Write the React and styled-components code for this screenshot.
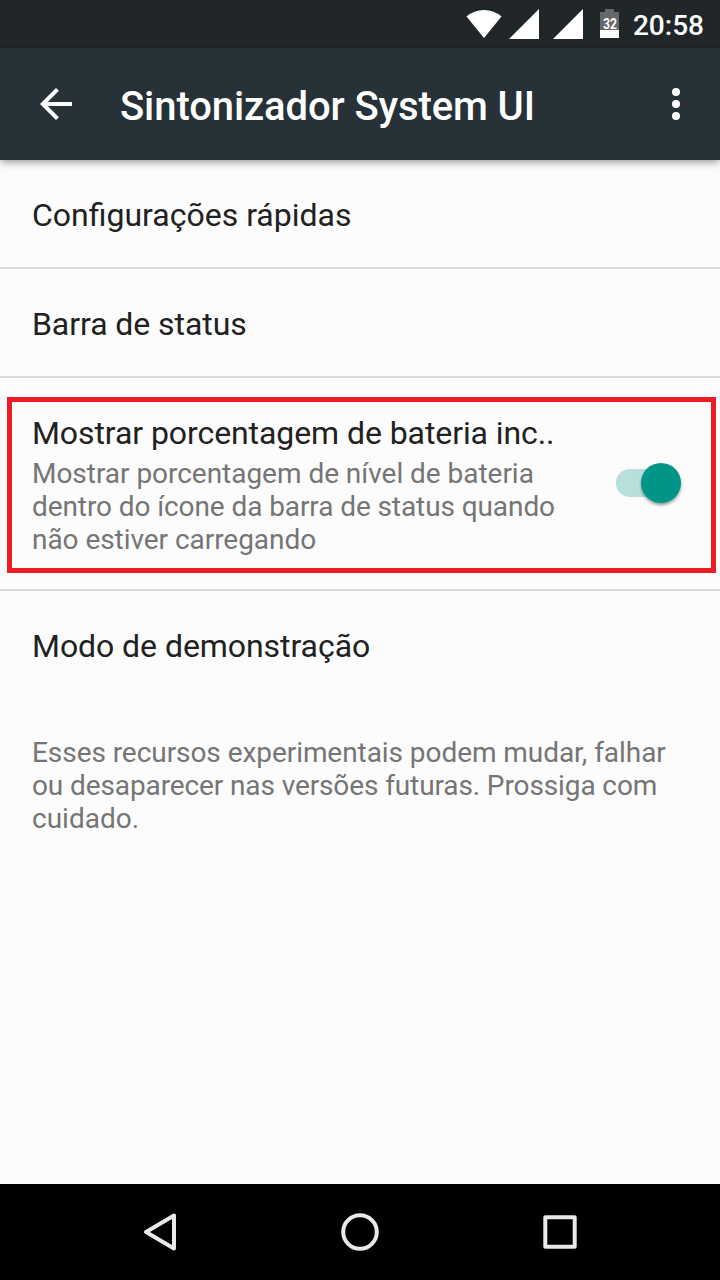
import React from "react";
import styled, { createGlobalStyle } from "styled-components";

const GlobalStyle = createGlobalStyle`
  * { box-sizing: border-box; }
  body { margin: 0; font-family: Roboto, "Noto Sans", sans-serif; background: #fcfcfc; }
`;

const Screen = styled.div`
  width: 720px;
  height: 1280px;
  display: flex;
  flex-direction: column;
  background: #fcfcfc;
  overflow: hidden;
`;

const StatusBar = styled.header`
  height: 48px;
  flex: none;
  display: flex;
  align-items: center;
  justify-content: space-between;
  padding: 0 16px 0 464px;
  background: #212729;
  color: #fff;
`;

const StatusIcons = styled.svg`
  display: block;
  flex: none;
  width: 160px;
  height: 48px;
`;

const Clock = styled.time`
  font-size: 28px;
  font-weight: 500;
  line-height: 48px;
  padding-top: 3px;
`;

const AppBar = styled.div`
  height: 112px;
  flex: none;
  display: flex;
  align-items: center;
  padding: 0 32px 0 36px;
  background: #263238;
  box-shadow: 0 2px 8px rgba(0, 0, 0, 0.42);
  z-index: 1;
`;

const BarIcon = styled.svg`
  display: block;
  flex: none;
  fill: #fff;
`;

const Title = styled.h1`
  flex: 1;
  margin: 0;
  padding: 6px 0 0 44px;
  color: #fff;
  font-size: 40px;
  font-weight: 500;
  line-height: 48px;
  letter-spacing: -0.1px;
  white-space: nowrap;
`;

const List = styled.main`
  flex: 1;
`;

const Row = styled.section`
  height: 109px;
  display: flex;
  align-items: center;
  padding: ${(p) => (p.$last ? 1 : 3)}px 32px 0;
  border-bottom: ${(p) => (p.$last ? "none" : "2px solid #dadada")};
`;

const RowTitle = styled.div`
  font-size: 32px;
  line-height: 38px;
  letter-spacing: ${(p) => p.$tracking || 0}px;
  color: #212121;
  white-space: nowrap;
`;

const HighlightRow = styled.section`
  height: 213px;
  padding: 19px 4px 0 7px;
  border-bottom: 2px solid #dadada;
`;

const Highlight = styled.div`
  height: 176px;
  display: flex;
  justify-content: space-between;
  border: 5px solid #ed1c24;
  padding: 12px 24px 0 20px;
`;

const Summary = styled.p`
  margin: ${(p) => p.$margin || "0"};
  font-size: 28px;
  line-height: 33px;
  color: #757575;
`;

const Line = styled.span`
  display: block;
  white-space: nowrap;
  letter-spacing: ${(p) => p.$tracking || 0}px;
`;

const Switch = styled.svg`
  flex: none;
  width: 80px;
  height: 60px;
  margin-top: 40px;
`;

const NavBar = styled.nav`
  height: 96px;
  flex: none;
  display: flex;
  justify-content: center;
  align-items: center;
  gap: 140px;
  background: #000;
`;

const NavIcon = styled.svg`
  width: 60px;
  height: 60px;
  fill: none;
  stroke: #e9e9e9;
  stroke-width: 4;
  stroke-linejoin: round;
`;

export default function App() {
  return (
    <Screen>
      <GlobalStyle />
      <StatusBar>
        <StatusIcons viewBox="464 0 160 48" fill="#fff">
          <path d="M466.500 16.500Q474 10 484 10T501.500 16.500L484 38Z" />
          <path d="M509 39H539V9Z" />
          <path d="M553 39H583V9Z" />
          <path d="M605 9h9v3h5v18h-19V12h5Z" fill="#64686a" />
          <path d="M600 30h19v8h-19Z" />
          <text x="603" y="29" textLength="14" lengthAdjust="spacingAndGlyphs" fontSize="15.500" fontWeight="700" fontFamily="Roboto">32</text>
        </StatusIcons>
        <Clock>20:58</Clock>
      </StatusBar>
      <AppBar>
        <BarIcon width="40" height="40" viewBox="36 84 40 40">
          <path d="M72 102H47.700L58.900 90.800L56 88L40 104L56 120L58.900 117.200L47.700 106H72Z" />
        </BarIcon>
        <Title>Sintonizador System UI</Title>
        <BarIcon width="24" height="40" viewBox="664 84 24 40">
          <circle cx="676" cy="92" r="4" />
          <circle cx="676" cy="104" r="4" />
          <circle cx="676" cy="116" r="4" />
        </BarIcon>
      </AppBar>
      <List>
        <Row><RowTitle>Configurações rápidas</RowTitle></Row>
        <Row><RowTitle $tracking={-0.07}>Barra de status</RowTitle></Row>
        <HighlightRow>
          <Highlight>
            <div>
              <RowTitle $tracking={-0.08}>Mostrar porcentagem de bateria inc..</RowTitle>
              <Summary $margin="5px 0 0">
                <Line $tracking={-0.03}>Mostrar porcentagem de nível de bateria</Line>
                <Line $tracking={-0.09}>dentro do ícone da barra de status quando</Line>
                <Line $tracking={-0.05}>não estiver carregando</Line>
              </Summary>
            </div>
            <Switch viewBox="607 454 80 60">
              <defs>
                <filter id="thumb" x="-30%" y="-30%" width="160%" height="160%">
                  <feDropShadow dx="0" dy="2" stdDeviation="1.8" floodOpacity="0.4" />
                </filter>
              </defs>
              <rect x="616" y="469" width="60" height="28" rx="14" fill="#b7e0dc" />
              <circle cx="661" cy="483" r="20" fill="#009587" filter="url(#thumb)" />
            </Switch>
          </Highlight>
        </HighlightRow>
        <Row $last><RowTitle $tracking={-0.06}>Modo de demonstração</RowTitle></Row>
        <Summary $margin="36px 32px 0">
          <Line $tracking={-0.06}>Esses recursos experimentais podem mudar, falhar</Line>
          <Line $tracking={-0.11}>ou desaparecer nas versões futuras. Prossiga com</Line>
          <Line>cuidado.</Line>
        </Summary>
      </List>
      <NavBar>
        <NavIcon viewBox="130 1202 60 60"><path d="M174 1215.500V1248.500L146 1232Z" /></NavIcon>
        <NavIcon viewBox="330 1202 60 60"><circle cx="360" cy="1232" r="16.800" /></NavIcon>
        <NavIcon viewBox="530 1202 60 60"><rect x="545.300" y="1217.300" width="29.400" height="29.400" /></NavIcon>
      </NavBar>
    </Screen>
  );
}
